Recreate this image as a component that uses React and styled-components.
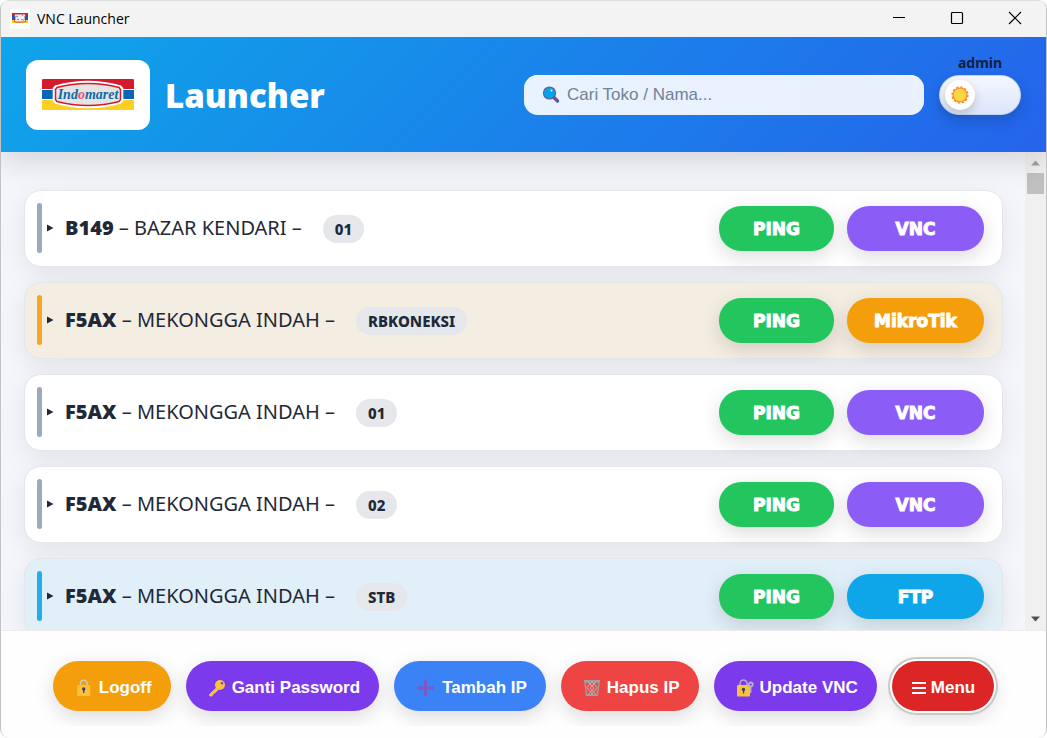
import React, { useState } from "react";
import styled, { createGlobalStyle, css } from "styled-components";

const GlobalStyle = createGlobalStyle`
  * { box-sizing: border-box; }
  body { margin: 0; background: #fff; }
`;

const ui = `"Noto Sans", "Open Sans", sans-serif`;
const sans = `"Liberation Sans", Arial, sans-serif`;

const Window = styled.div`
  display: flex;
  flex-direction: column;
  height: 100vh;
  overflow: hidden;
  border: 1px solid #c3c3c3;
  border-top-color: #dcdcdc;
  border-bottom: 0;
  border-radius: 9px;
  background: #f5f6fc;
  color: #1f2937;
  font-family: ${ui};
`;

const TitleBar = styled.div`
  position: relative;
  z-index: 2;
  display: flex;
  align-items: center;
  flex: none;
  height: 36px;
  padding: 0 1px 0 9px;
  background: #f3f3f3;
`;

const AppName = styled.span`
  flex: 1;
  padding-left: 7px;
  color: #000;
  font: 14px/20px "Open Sans", sans-serif;
`;

const CaptionButton = styled.button`
  display: grid;
  place-items: center;
  width: 58px;
  height: 34px;
  padding: 0 2px 2px 0;
  border: 0;
  background: transparent;
`;

const Header = styled.header`
  position: relative;
  z-index: 1;
  display: flex;
  align-items: center;
  flex: none;
  height: 115px;
  padding: 0 25px;
  background: linear-gradient(135deg, #0ea5e9, #2563eb);
  box-shadow: 0 8px 30px rgba(0, 0, 0, 0.15);
`;

const LogoBox = styled.div`
  display: grid;
  place-items: center;
  width: 124px;
  height: 70px;
  border-radius: 12px;
  background: #fff;
`;

const Title = styled.h1`
  flex: 1;
  margin: 0;
  padding: 2px 0 0 15px;
  color: #fff;
  font: 900 33px/48px ${ui};
`;

const Search = styled.label`
  display: flex;
  align-items: center;
  gap: 7px;
  width: 400px;
  height: 40px;
  padding: 0 18px;
  border-radius: 14px;
  background: linear-gradient(90deg, #e8f3fe, #eaf0fd);
  box-shadow: inset 0 1px 1px #fff;
`;

const SearchInput = styled.input`
  flex: 1;
  min-width: 0;
  padding: 0;
  border: 0;
  outline: 0;
  background: transparent;
  color: #1f2937;
  font: 17px/22px ${sans};
  &::placeholder { color: #728197; opacity: 1; }
`;

const Account = styled.div`
  position: relative;
  margin-left: 15px;
`;

const UserName = styled.span`
  position: absolute;
  right: 0;
  bottom: 100%;
  left: 0;
  color: #0f1f3f;
  font: 700 14px/24px ${ui};
  text-align: center;
`;

const Switch = styled.label`
  display: flex;
  align-items: center;
  justify-content: ${(p) => (p.$dark ? "flex-end" : "flex-start")};
  width: 82px;
  height: 40px;
  padding: 0 5px;
  border: 1px solid #c5d3ef;
  border-radius: 20px;
  background: linear-gradient(#f5f7ff, #dbe6f9);
  box-shadow: 0 6px 14px rgba(0, 0, 0, 0.15);
`;

const HiddenCheck = styled.input`
  position: absolute;
  opacity: 0;
`;

const Knob = styled.span`
  display: grid;
  place-items: center;
  width: 30px;
  height: 30px;
  border-radius: 50%;
  background: #fff;
  box-shadow: 0 4px 10px rgba(0, 0, 0, 0.18);
`;

const Content = styled.main`
  display: flex;
  flex: 1;
  min-height: 0;
`;

const List = styled.ul`
  flex: 1;
  min-width: 0;
  margin: 0;
  padding: 38px 22px 38px 23px;
  overflow: hidden;
  list-style: none;
  display: flex;
  flex-direction: column;
  gap: 15px;
`;

const tints = {
  plain: ["#ffffff", "#9caabd"],
  router: ["#f4ede2", "#f6a623"],
  box: ["#e1eff8", "#24adeb"],
};

const Row = styled.li`
  display: flex;
  align-items: center;
  flex: none;
  height: 77px;
  padding: 0 18px 0 12px;
  border: 1px solid #e3e6ea;
  border-radius: 17px;
  background: ${(p) => tints[p.$kind][0]};
  box-shadow: 0 8px 28px rgba(0, 0, 0, 0.08);
`;

const Bar = styled.span`
  width: 5px;
  height: 50px;
  margin-bottom: 2px;
  border-radius: 3px;
  background: ${(p) => tints[p.$kind][1]};
`;

const Expand = styled.button`
  display: grid;
  place-items: center start;
  width: 23px;
  height: 30px;
  padding: 0 0 2px 5px;
  border: 0;
  background: transparent;
`;

const Store = styled.span`
  flex: none;
  font-size: 20px;
  line-height: 28px;
  padding-bottom: 2px;
`;

const Code = styled.strong`
  font-weight: 900;
`;

const Badge = styled.span`
  margin-left: 21px;
  padding: 0 12px;
  border-radius: 14px;
  background: #e5e7eb;
  font-size: 15px;
  font-weight: 800;
  line-height: 28px;
`;

const Actions = styled.div`
  display: flex;
  gap: 13px;
  margin-left: auto;
`;

const pill = css`
  border: 0;
  color: #fff;
  box-shadow: 0 6px 20px rgba(0, 0, 0, 0.14);
`;

const actionColors = {
  PING: "#22c55e",
  VNC: "#8b5cf6",
  MikroTik: "#f59e0b",
  FTP: "#0ea5e9",
};

const Action = styled.button`
  ${pill}
  width: ${(p) => (p.$wide ? 137 : 115)}px;
  height: 45px;
  padding: 0;
  border-radius: 22px;
  background: ${(p) => actionColors[p.$name]};
  font: 900 17px/22px "Arial Black", "DejaVu Sans", sans-serif;
  -webkit-text-stroke: 1px currentColor;
`;

const ScrollBar = styled.div`
  display: flex;
  flex-direction: column;
  align-items: center;
  flex: none;
  width: 21px;
  padding: 8px 2px;
  background: #f0f0f0;
`;

const Thumb = styled.span`
  width: 17px;
  height: 21px;
  margin: 7px 0 auto;
  background: #c1c1c1;
`;

const Footer = styled.footer`
  flex: none;
  padding-bottom: 12px;
  border-top: 1px solid #ececee;
  background: #fefefe;
`;

const Toolbar = styled.nav`
  display: flex;
  justify-content: center;
  gap: 15px;
  padding: 30px 0 15px;
  overflow: hidden;
`;

const Tool = styled.button`
  ${pill}
  display: flex;
  align-items: center;
  justify-content: center;
  gap: ${(p) => (p.$active ? 4 : 6)}px;
  height: 50px;
  padding: 3px 19px 0 ${(p) => (p.$active ? 20 : 22)}px;
  border-radius: 25px;
  background: ${(p) => p.$color};
  font: 700 17px/22px ${sans};
  ${(p) => p.$active && css`
    box-shadow: 0 0 0 2px #fff, 0 0 0 4px #c9c9c9, 0 6px 20px rgba(0, 0, 0, 0.14);
  `}
`;

const Logo = () => (
  <svg width="92" height="31" viewBox="0 0 92 31" role="img" aria-label="Indomaret">
    <rect width="92" height="31" rx="1" fill="#fff" />
    <path d="M0 1q0-1 1-1h90q1 0 1 1v9H0z" fill="#d51b2b" />
    <path d="M0 11h92v9H0z" fill="#0768b1" />
    <path d="M0 21h92v9q0 1-1 1H1q-1 0-1-1z" fill="#ffce23" />
    <path d="M14 7.500Q30 3 46 3t32 4.500l2 2v12l-2 2q-16 4.500-32 4.500t-32-4.500l-2-2v-12z" fill="#e4e4e4" stroke="#fff" strokeWidth="2.600" />
    <path d="M15 8.500Q30 4.500 46 4.500t31 4l1.500 2v10l-1.500 2q-15 4-31 4t-31-4l-1.500-2v-10z" fill="#e4e4e4" stroke="#d51b2b" strokeWidth="1.500" />
    <text x="46" y="20" textAnchor="middle" fontFamily="Liberation Serif, serif" fontSize="14" fontStyle="italic" fontWeight="700" fill="#1268a8">
      Ind<tspan fill="#ed5362">o</tspan>maret
    </text>
  </svg>
);

const AppIcon = () => (
  <svg width="20" height="20" viewBox="0 0 20 20" aria-hidden="true">
    <path d="M0 0h20v20H0z" fill="#fff" />
    <path d="M2 4h16v3H2z" fill="#d51b2b" />
    <path d="M2 6h16v6H2z" fill="#0768b1" />
    <path d="M2 11h16v3H2z" fill="#ffce23" />
    <path d="M5 5h10l1 1-1 1.500v3l1 1.500-2 1H6l-2-1 1-1.500v-3L4 6z" fill="#f1eef1" stroke="#d51b2b" strokeWidth=".8" />
    <path d="M6 7l2 1M7 11l1-1 1 1M12 7l1-1M11 10l1 1h2" stroke="#4779ac" fill="none" strokeWidth=".8" />
  </svg>
);

const SearchIcon = () => (
  <svg width="18" height="18" viewBox="0 0 18 18" aria-hidden="true">
    <path d="M11 10.500l4.500 4.500" stroke="#635994" strokeWidth="3.500" strokeLinecap="round" />
    <circle cx="7.500" cy="7" r="6" fill="#00a6ed" stroke="#635994" strokeWidth="1.200" />
    <circle cx="9.500" cy="4.500" r="1" fill="#fff" />
  </svg>
);

const Sun = () => (
  <svg width="18" height="18" viewBox="0 0 18 18" aria-hidden="true">
    <circle cx="9" cy="9" r="7.600" fill="#ff822d" />
    <circle cx="9" cy="9" r="7.900" fill="none" stroke="#ff822d" strokeWidth="1.400" strokeDasharray="2.200 1.940" />
    <circle cx="9" cy="9" r="6.500" fill="#fcd53f" />
  </svg>
);

const LockIcon = () => (
  <svg width="18" height="18" viewBox="0 0 18 18" aria-hidden="true">
    <path d="M5.500 8V4.500a3.300 3.300 0 0 1 6.600 0V8" fill="none" stroke="#cfc8c2" strokeWidth="1.500" />
    <rect x="2.200" y="6" width="13" height="11" rx="1" fill="#f9c23c" />
    <circle cx="8.700" cy="10" r="1.700" fill="#433b6b" />
    <path d="M8.100 10h1.300v4H8.100z" fill="#433b6b" />
  </svg>
);

const KeyIcon = () => (
  <svg width="18" height="18" viewBox="0 0 18 18" aria-hidden="true">
    <path d="M10.500 7L1.500 15.500v1l1 .5h1.500l1.500-2.500 2-1 2.500-3 1.500-1z" fill="#f9c23c" stroke="#f9c23c" />
    <path fillRule="evenodd" d="M12 1a5 5 0 1 1 0 10 5 5 0 0 1 0-10zm2 2a1.300 1.300 0 1 0 0 2.600A1.300 1.300 0 0 0 14 3z" fill="#f9c23c" />
  </svg>
);

const PlusIcon = () => (
  <svg width="20" height="18" viewBox="0 0 20 18" aria-hidden="true">
    <path d="M9.500 2v14M2.500 9h14" stroke="#8056c0" strokeWidth="2.800" strokeLinecap="round" />
  </svg>
);

const TrashIcon = () => (
  <svg width="18" height="18" viewBox="0 0 18 18" aria-hidden="true">
    <path d="M2 3h14l-1.500 13h-11z" fill="#ef4c4c" stroke="#9b9b9b" strokeWidth="1.500" />
    <path d="M5 3l6 6-5 6M9 3L4 8.500l5 6.500M9 3l5 5.500L9 15M13 3L7 9l5.500 6" fill="none" stroke="#bdb0b0" strokeWidth="1" />
    <path d="M1 1h16v2.200H1zM3.500 15h11v2h-11z" fill="#a0a0a0" />
  </svg>
);

const LockKeyIcon = () => (
  <svg width="18" height="18" viewBox="0 0 18 18" aria-hidden="true">
    <path d="M4 8V4.500a3.500 3.500 0 0 1 7 0V8" fill="none" stroke="#b9afc5" strokeWidth="1.500" />
    <path d="M14.500 7v7" stroke="#b9afc5" strokeWidth="1.800" />
    <rect x="1" y="6" width="13" height="11.500" rx="1" fill="#f9c23c" />
    <circle cx="7.500" cy="10.500" r="1.700" fill="#433b6b" />
    <path d="M6.900 11h1.300v3.500H6.900z" fill="#433b6b" />
    <circle cx="14.700" cy="5.500" r="2" fill="none" stroke="#b9afc5" strokeWidth="1.800" />
  </svg>
);

const MenuIcon = () => (
  <svg width="15" height="14" viewBox="0 0 15 14" aria-hidden="true">
    <path d="M0 2h14M0 7h14M0 12h14" stroke="#fff" strokeWidth="2" />
  </svg>
);

const Triangle = ({ up, color = "#505050" }) => (
  <svg width="9" height="6" viewBox="0 0 9 6" aria-hidden="true">
    <path d={up ? "M0 5.500l4.500-5L9 5.500z" : "M0 .5h9l-4.500 5z"} fill={color} />
  </svg>
);

const stores = [
  { code: "B149", name: "BAZAR KENDARI", badge: "01", action: "VNC", kind: "plain" },
  { code: "F5AX", name: "MEKONGGA INDAH", badge: "RBKONEKSI", action: "MikroTik", kind: "router" },
  { code: "F5AX", name: "MEKONGGA INDAH", badge: "01", action: "VNC", kind: "plain" },
  { code: "F5AX", name: "MEKONGGA INDAH", badge: "02", action: "VNC", kind: "plain" },
  { code: "F5AX", name: "MEKONGGA INDAH", badge: "STB", action: "FTP", kind: "box" },
];

const tools = [
  { label: "Logoff", color: "#f59e0b", Icon: LockIcon },
  { label: "Ganti Password", color: "#7c3aed", Icon: KeyIcon },
  { label: "Tambah IP", color: "#3b82f6", Icon: PlusIcon },
  { label: "Hapus IP", color: "#ef4444", Icon: TrashIcon },
  { label: "Update VNC", color: "#7c3aed", Icon: LockKeyIcon },
  { label: "Menu", color: "#dc2626", Icon: MenuIcon, active: true },
];

export default function App() {
  const [dark, setDark] = useState(false);
  return (
    <Window>
      <GlobalStyle />
      <TitleBar>
        <AppIcon />
        <AppName>VNC Launcher</AppName>
        <CaptionButton aria-label="Minimize">
          <svg width="14" height="14"><path d="M1 6.500h12" stroke="#000" /></svg>
        </CaptionButton>
        <CaptionButton aria-label="Maximize">
          <svg width="14" height="14"><rect x="1.500" y="1.500" width="11" height="11" rx="1" fill="none" stroke="#000" strokeWidth="1.200" /></svg>
        </CaptionButton>
        <CaptionButton aria-label="Close">
          <svg width="14" height="14"><path d="M1 1l12 12M13 1L1 13" stroke="#000" strokeWidth="1.200" /></svg>
        </CaptionButton>
      </TitleBar>
      <Header>
        <LogoBox><Logo /></LogoBox>
        <Title>Launcher</Title>
        <Search>
          <SearchIcon />
          <SearchInput type="text" aria-label="Cari Toko / Nama" placeholder="Cari Toko / Nama..." />
        </Search>
        <Account>
          <UserName>admin</UserName>
          <Switch $dark={dark}>
            <HiddenCheck type="checkbox" role="switch" aria-label="Tema" checked={dark} onChange={(e) => setDark(e.target.checked)} />
            <Knob><Sun /></Knob>
          </Switch>
        </Account>
      </Header>
      <Content>
        <List>
          {stores.map((s, i) => (
            <Row key={i} $kind={s.kind}>
              <Bar $kind={s.kind} />
              <Expand aria-label="Detail">
                <svg width="7" height="8"><path d="M0 .5L6.500 4 0 7.500z" fill="#1f2937" /></svg>
              </Expand>
              <Store><Code>{s.code}</Code> – {s.name} –</Store>
              <Badge>{s.badge}</Badge>
              <Actions>
                <Action $name="PING">PING</Action>
                <Action $name={s.action} $wide>{s.action}</Action>
              </Actions>
            </Row>
          ))}
        </List>
        <ScrollBar aria-hidden="true">
          <Triangle up color="#a3a3a3" />
          <Thumb />
          <Triangle />
        </ScrollBar>
      </Content>
      <Footer>
        <Toolbar>
          {tools.map(({ label, color, Icon, active }) => (
            <Tool key={label} $color={color} $active={active}><Icon />{label}</Tool>
          ))}
        </Toolbar>
      </Footer>
    </Window>
  );
}
